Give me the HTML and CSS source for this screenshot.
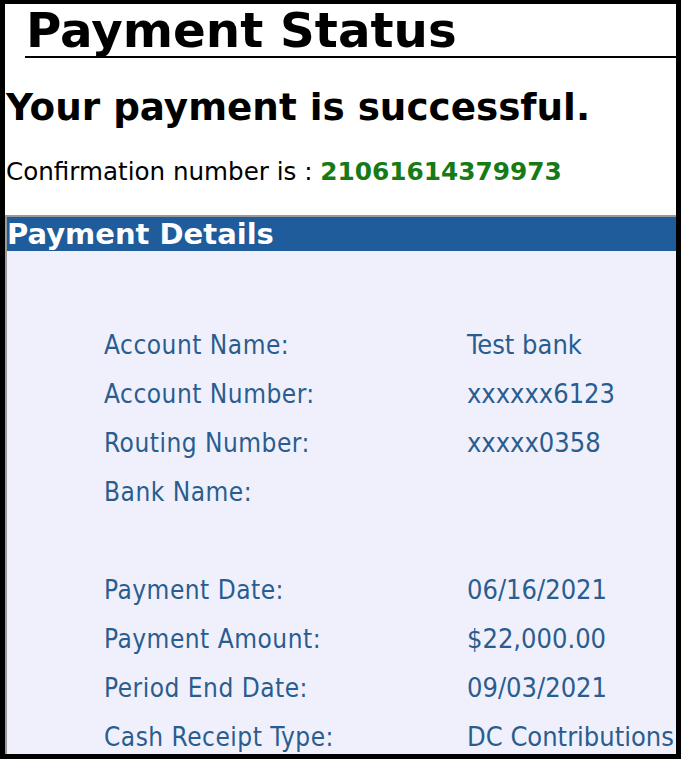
FILE: index.html
```html
<!DOCTYPE html>
<html>
<head>
<meta charset="utf-8">
<link rel="stylesheet" href="styles.css">
</head>
<body>
<div class="frame">
  <h1 class="title">Payment Status</h1>
  <h2 class="success">Your payment is successful.</h2>
  <p class="confirm">Confirmation number is : <span class="number">21061614379973</span></p>
  <section class="panel">
    <div class="panel-head">Payment Details</div>
    <div class="details">
      <div class="row"><span class="label"></span><span class="value"></span></div>
      <div class="row"><span class="label">Account Name:</span><span class="value">Test bank</span></div>
      <div class="row"><span class="label">Account Number:</span><span class="value">xxxxxx6123</span></div>
      <div class="row"><span class="label">Routing Number:</span><span class="value">xxxxx0358</span></div>
      <div class="row"><span class="label">Bank Name:</span><span class="value"></span></div>
      <div class="row"><span class="label"></span><span class="value"></span></div>
      <div class="row"><span class="label">Payment Date:</span><span class="value">06/16/2021</span></div>
      <div class="row"><span class="label">Payment Amount:</span><span class="value">$22,000.00</span></div>
      <div class="row"><span class="label">Period End Date:</span><span class="value">09/03/2021</span></div>
      <div class="row"><span class="label">Cash Receipt Type:</span><span class="value">DC Contributions</span></div>
    </div>
  </section>
</div>
</body>
</html>
```
FILE: styles.css
```css
html, body {
  margin: 0;
  padding: 0;
  background: #000;
}
.frame {
  box-sizing: border-box;
  width: 681px;
  height: 759px;
  border: 5px solid #000;
  border-top-width: 4px;
  background: #fff;
  overflow: hidden;
  font-family: "DejaVu Sans", Verdana, sans-serif;
  color: #000;
}
.title {
  margin: 0 0 0 20px;
  padding-left: 1px;
  font-size: 48.3px;
  line-height: 52px;
  font-weight: bold;
  border-bottom: 2px solid #000;
}
.success {
  margin: 27px 0 0 0;
  padding-left: 1px;
  font-size: 37.3px;
  line-height: 44px;
  font-weight: bold;
}
.confirm {
  margin: 28px 0 0 0;
  padding-left: 1px;
  font-size: 24.6px;
  line-height: 30px;
}
.number {
  color: #167a16;
  font-weight: bold;
  font-size: 24.8px;
}
.panel {
  margin-top: 28px;
  border-top: 2px solid #9a9a9a;
  border-left: 2px solid #9a9a9a;
  background: #f0f0fc;
  height: 600px;
}
.panel-head {
  background: #1e5c9c;
  color: #fff;
  font-weight: bold;
  font-size: 29px;
  line-height: 34px;
  padding-left: 0;
}
.details {
  padding: 20px 0 0 97px;
  font-family: "DejaVu Sans Condensed", "DejaVu Sans", sans-serif;
  color: #2a5d8f;
}
.row {
  display: grid;
  grid-template-columns: 363px auto;
  height: 49px;
  align-items: center;
  white-space: nowrap;
}
.label {
  font-size: 26px;
  letter-spacing: 0.5px;
}
.value {
  font-size: 27px;
}
```
